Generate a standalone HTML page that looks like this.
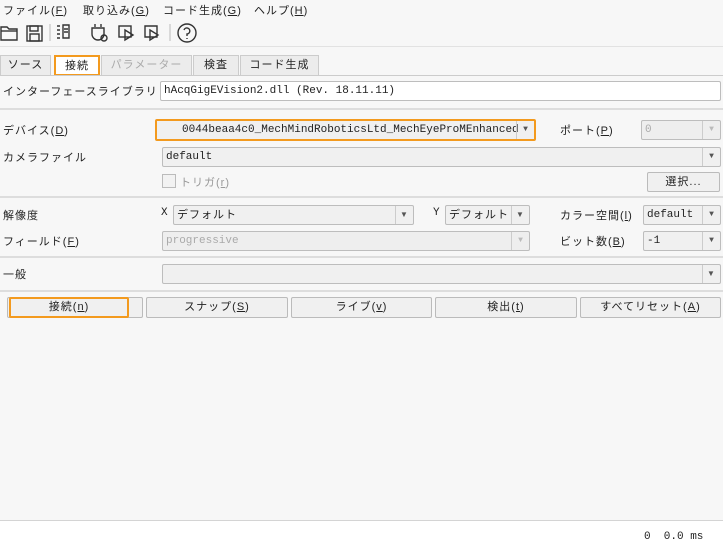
<!DOCTYPE html>
<html><head><meta charset="utf-8"><style>
*{box-sizing:border-box;margin:0;padding:0}
body{width:723px;height:549px;background:#f7f7f7;font-family:"Liberation Sans","Noto Sans CJK JP",sans-serif;font-size:11px;color:#222;position:relative;overflow:hidden;letter-spacing:1px}
.a{position:absolute;white-space:nowrap}
.m{font-family:"Liberation Mono","Noto Sans CJK JP",monospace;letter-spacing:0}
.cb{position:absolute;height:20px;background:#f0f0f0;border:1px solid #bdbdbd;border-radius:2px;line-height:18px;padding-left:3px}
.cb .ar{position:absolute;right:0;top:0;width:18px;height:18px;border-left:1px solid #ccc;font-size:8px;text-align:center;color:#555}
.dis{color:#aaa;background:#eee}
.tab{position:absolute;top:55px;height:20px;border:1px solid #ccc;border-bottom:none;background:#ececec;line-height:19px;text-align:center}
.btn{position:absolute;top:297px;height:21px;background:#f0f0f0;border:1px solid #bbb;border-radius:2px;text-align:center;line-height:19px}
.sep{position:absolute;left:0;width:723px;height:2px;background:#ddd}
u{text-decoration:underline}
</style></head><body>
<div class="a" style="left:3px;top:2px">ファイル(<u>F</u>)</div>
<div class="a" style="left:83px;top:2px">取り込み(<u>G</u>)</div>
<div class="a" style="left:163px;top:2px">コード生成(<u>G</u>)</div>
<div class="a" style="left:254px;top:2px">ヘルプ(<u>H</u>)</div>
<svg class="a" style="left:0;top:22px" width="200" height="22" fill="none" stroke="#333" stroke-width="1.4">
<path d="M1 5h6l2 2h8v11H1z"/><path d="M1 9h16"/>
<rect x="27" y="4" width="15" height="15"/><rect x="30" y="4" width="8" height="5"/><rect x="30" y="12" width="9" height="7"/>
<path d="M50 2v17" stroke="#ccc"/>
<path d="M57 4h3M57 8h3M57 12h3M57 16h3M63 3h6v13h-6z M64 7h4M64 10h4"/>
<path d="M95 5v-3M101 5v-3M92 6h12v6a6 6 0 0 1-12 0z"/><circle cx="104" cy="16" r="3"/>
<rect x="119" y="4" width="12" height="11"/><path d="M125 8l8 5-8 5z"/>
<path d="M145 4h12v11h-12zM150 8l8 5-8 5z"/>
<path d="M170 2v17" stroke="#ccc"/>
<circle cx="187" cy="11" r="9"/><path d="M184 8a3 3 0 1 1 3 4v2M187 16v1"/>
</svg>
<div class="sep" style="top:46px;height:1px;background:#e2e2e2"></div>
<div class="tab" style="left:0;width:51px">ソース</div>
<div class="tab" style="left:54px;width:46px;background:#fff;border:2px solid #f39a1e;height:21px">接続</div>
<div class="tab" style="left:101px;width:91px;color:#aaa">パラメーター</div>
<div class="tab" style="left:193px;width:46px">検査</div>
<div class="tab" style="left:240px;width:79px">コード生成</div>
<div class="a" style="left:0;top:75px;width:723px;height:1px;background:#ccc"></div>
<div class="a" style="left:3px;top:83px">インターフェースライブラリ</div>
<div class="cb m" style="left:160px;top:81px;width:561px;background:#fff">hAcqGigEVision2.dll (Rev. 18.11.11)</div>
<div class="sep" style="top:108px"></div>
<div class="a" style="left:3px;top:122px">デバイス(<u>D</u>)</div>
<div class="cb m" style="left:155px;top:119px;width:381px;height:22px;border:2px solid #f39a1e;padding-left:25px;font-size:11px">0044beaa4c0_MechMindRoboticsLtd_MechEyeProMEnhanced<span class="ar">▼</span></div>
<div class="a" style="left:560px;top:122px">ポート(<u>P</u>)</div>
<div class="cb m dis" style="left:641px;top:120px;width:80px">0<span class="ar" style="color:#bbb">▼</span></div>
<div class="a" style="left:3px;top:149px">カメラファイル</div>
<div class="cb m" style="left:162px;top:147px;width:559px">default<span class="ar">▼</span></div>
<div class="a" style="left:162px;top:174px;width:14px;height:14px;border:1px solid #bbb;background:#f2f2f2"></div>
<div class="a" style="left:180px;top:174px;color:#999">トリガ(<u>r</u>)</div>
<div class="btn" style="left:647px;top:172px;width:73px;height:20px">選択...</div>
<div class="sep" style="top:196px"></div>
<div class="a" style="left:3px;top:207px">解像度</div>
<div class="a m" style="left:161px;top:207px">X</div>
<div class="cb" style="left:173px;top:205px;width:241px">デフォルト<span class="ar">▼</span></div>
<div class="a m" style="left:433px;top:207px">Y</div>
<div class="cb" style="left:445px;top:205px;width:85px">デフォルト<span class="ar">▼</span></div>
<div class="a" style="left:560px;top:207px">カラー空間(<u>l</u>)</div>
<div class="cb m" style="left:643px;top:205px;width:78px">default<span class="ar">▼</span></div>
<div class="a" style="left:3px;top:233px">フィールド(<u>F</u>)</div>
<div class="cb m dis" style="left:162px;top:231px;width:368px">progressive<span class="ar" style="color:#bbb">▼</span></div>
<div class="a" style="left:560px;top:233px">ビット数(<u>B</u>)</div>
<div class="cb m" style="left:643px;top:231px;width:78px">-1<span class="ar">▼</span></div>
<div class="sep" style="top:256px"></div>
<div class="a" style="left:3px;top:266px">一般</div>
<div class="cb" style="left:162px;top:264px;width:559px"><span class="ar">▼</span></div>
<div class="sep" style="top:290px"></div>
<div class="btn" style="left:7px;width:136px"></div>
<div class="btn" style="left:9px;width:120px;border:2px solid #f39a1e;line-height:17px">接続(<u>n</u>)</div>
<div class="btn" style="left:146px;width:142px">スナップ(<u>S</u>)</div>
<div class="btn" style="left:291px;width:141px">ライブ(<u>v</u>)</div>
<div class="btn" style="left:435px;width:142px">検出(<u>t</u>)</div>
<div class="btn" style="left:580px;width:141px">すべてリセット(<u>A</u>)</div>
<div class="a" style="left:0;top:520px;width:723px;height:29px;background:#fff;border-top:1px solid #d4d4d4"></div>
<div class="a m" style="left:644px;top:531px">0&nbsp; 0.0 ms</div>
</body></html>
